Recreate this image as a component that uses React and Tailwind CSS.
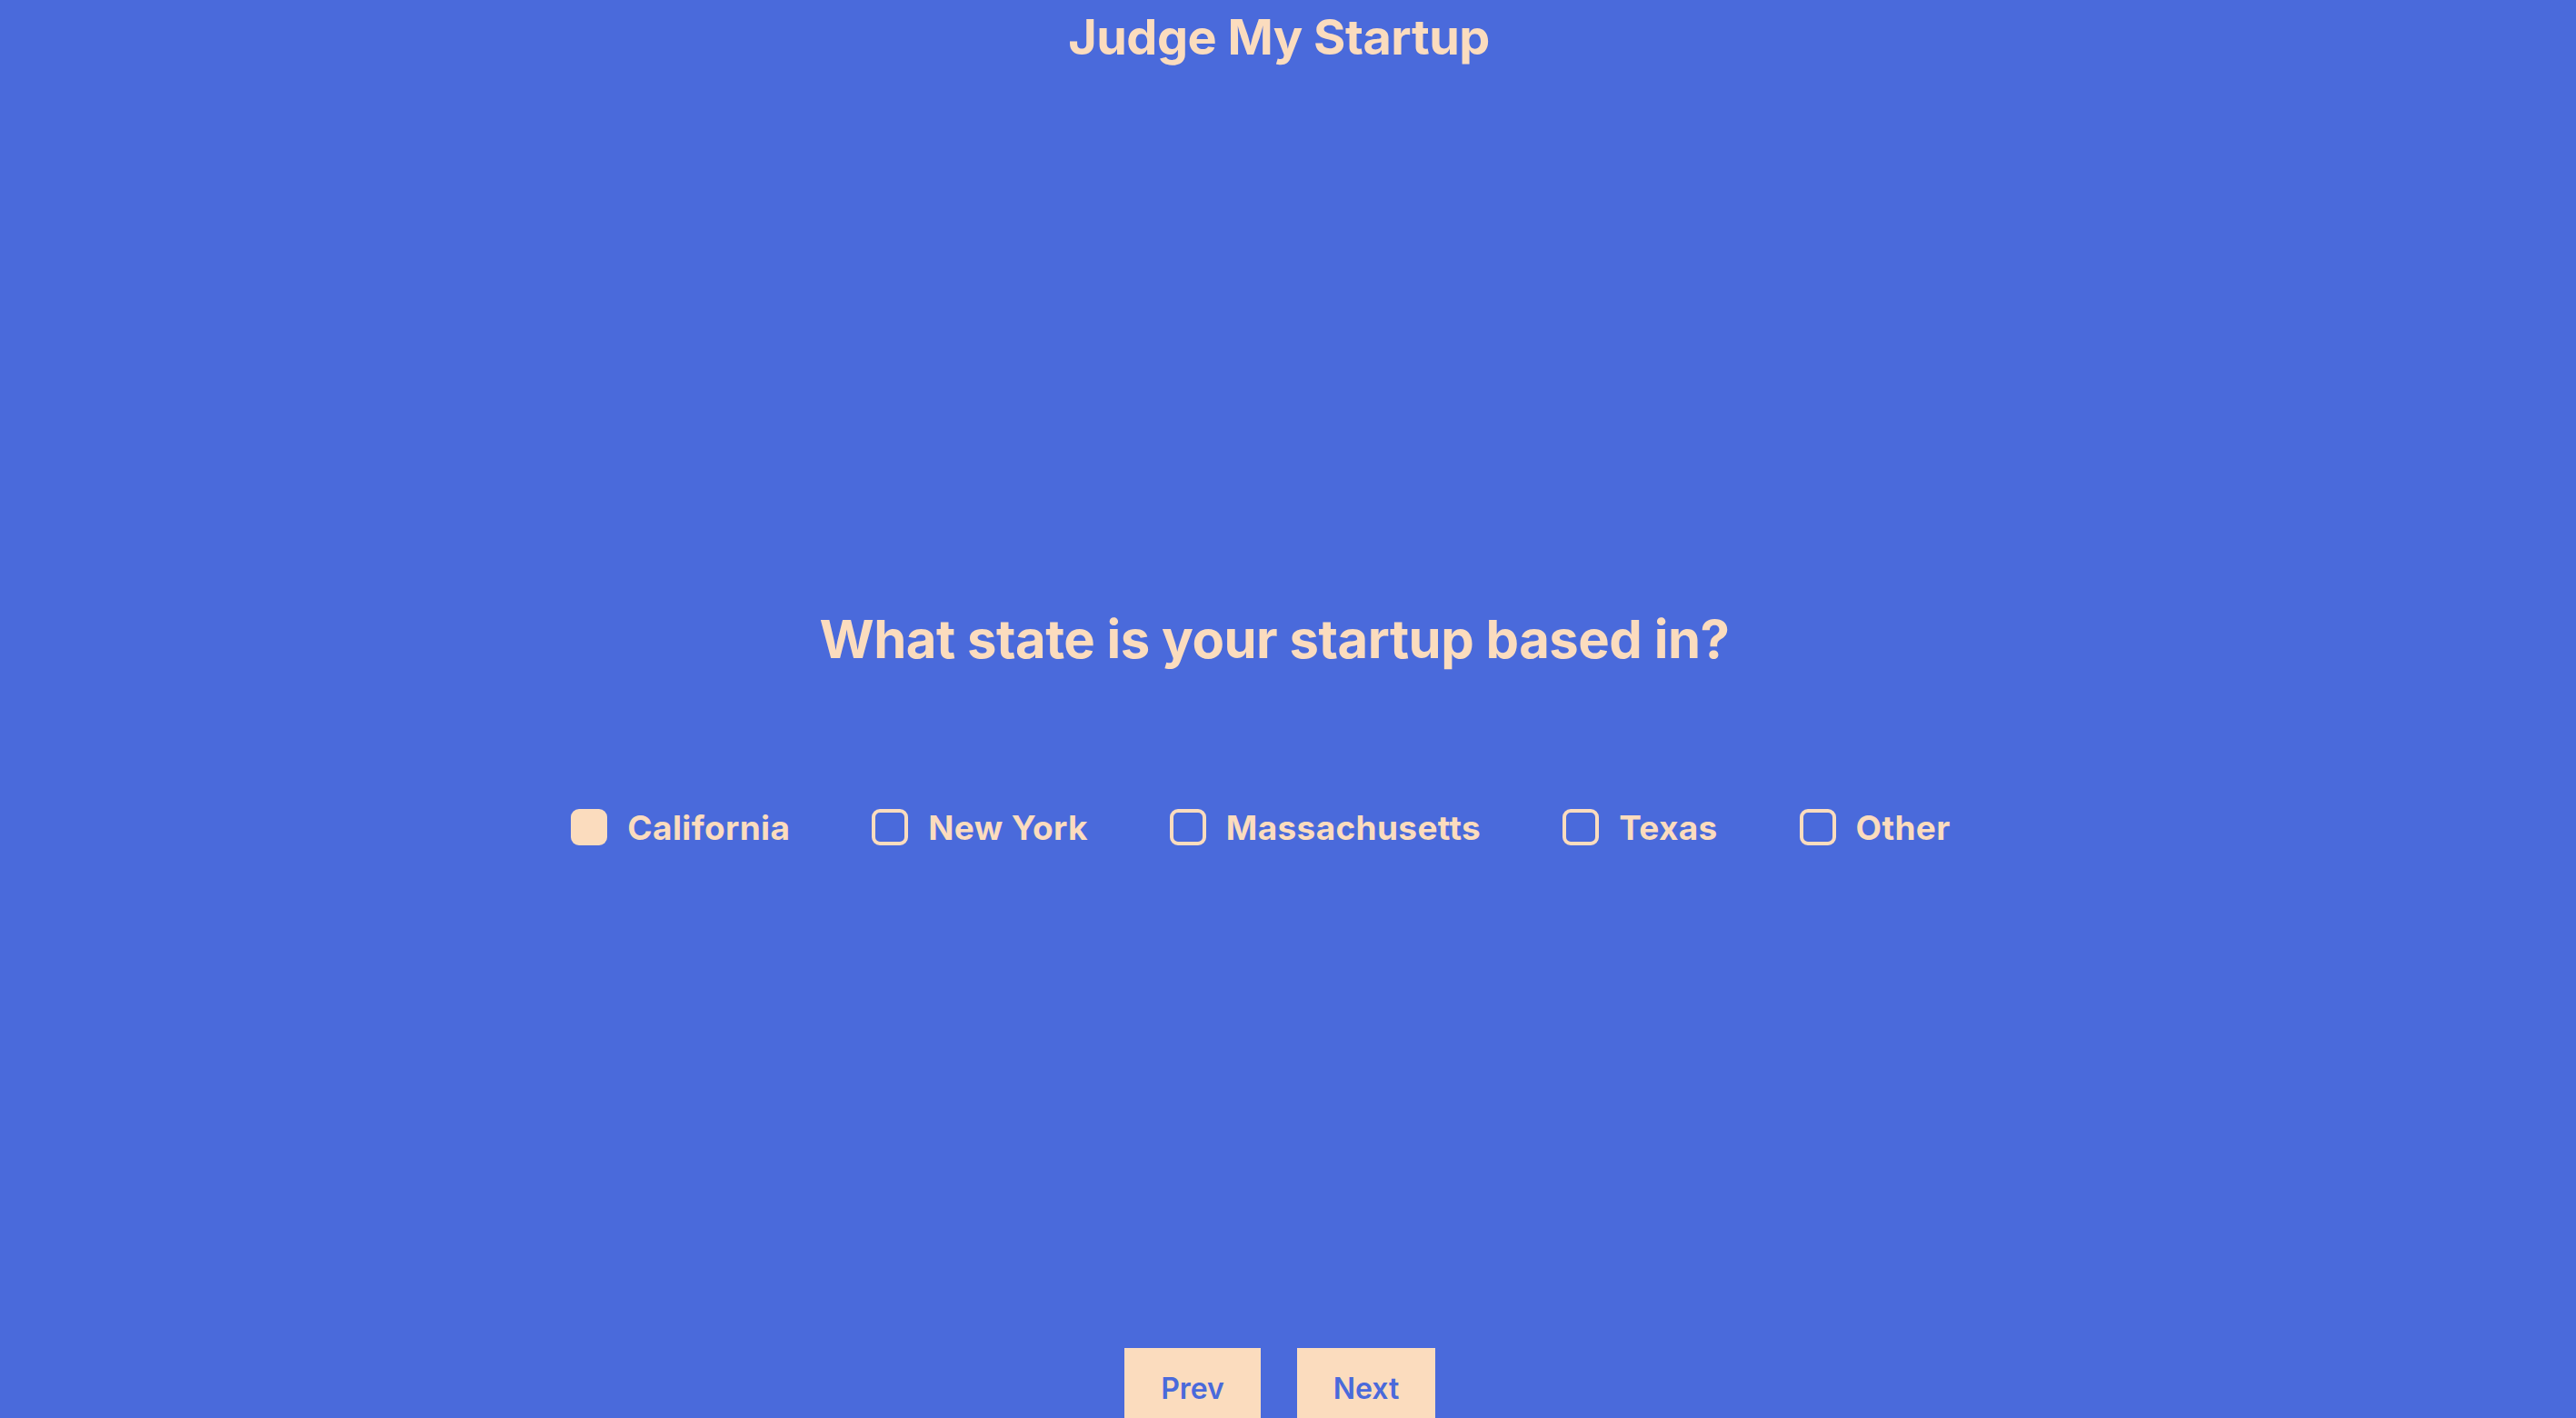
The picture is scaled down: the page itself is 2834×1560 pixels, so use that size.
import React, { useState } from "react";

const OPTIONS = ["California", "New York", "Massachusetts", "Texas", "Other"];

export default function App() {
  const [selected, setSelected] = useState("California");
  return (
    <div
      className="h-[1560px] w-full overflow-hidden bg-[#4a6adb] text-[#fbdcbe]"
      style={{ fontFamily: "Inter, 'Noto Sans', sans-serif" }}
    >
      <div className="flex flex-col items-center">
        <h1 className="mt-[14px] mr-[20px] text-[54px] font-bold leading-none tracking-[-0.5px]">
          Judge My Startup
        </h1>
        <h2 className="mt-[606px] mr-[30px] text-[58px] font-bold leading-none tracking-[-0.5px]">
          What state is your startup based in?
        </h2>
        <div className="mt-[158px] mr-[60px] flex items-center gap-[90px]">
          {OPTIONS.map((o) => {
            const on = o === selected;
            return (
              <label
                key={o}
                className="flex cursor-pointer items-center gap-[22px]"
                onClick={() => setSelected(o)}
              >
                <span
                  className={
                    on
                      ? "h-[40px] w-[40px] rounded-[9px] bg-[#fbdcbe]"
                      : "h-[40px] w-[40px] rounded-[9px] border-[4px] border-[#fbdcbe]"
                  }
                />
                <span className="text-[37px] font-bold leading-none tracking-[0.35px]">{o}</span>
              </label>
            );
          })}
        </div>
        <div className="mt-[553px] mr-[18px] flex gap-[40px]">
          <button className="w-[150px] bg-[#fbdcbe] pt-[29px] pb-[30px] text-[32px] font-semibold leading-none text-[#4a6adb]">
            Prev
          </button>
          <button className="w-[152px] bg-[#fbdcbe] pt-[29px] pb-[30px] text-[32px] font-semibold leading-none text-[#4a6adb]">
            Next
          </button>
        </div>
      </div>
    </div>
  );
}
